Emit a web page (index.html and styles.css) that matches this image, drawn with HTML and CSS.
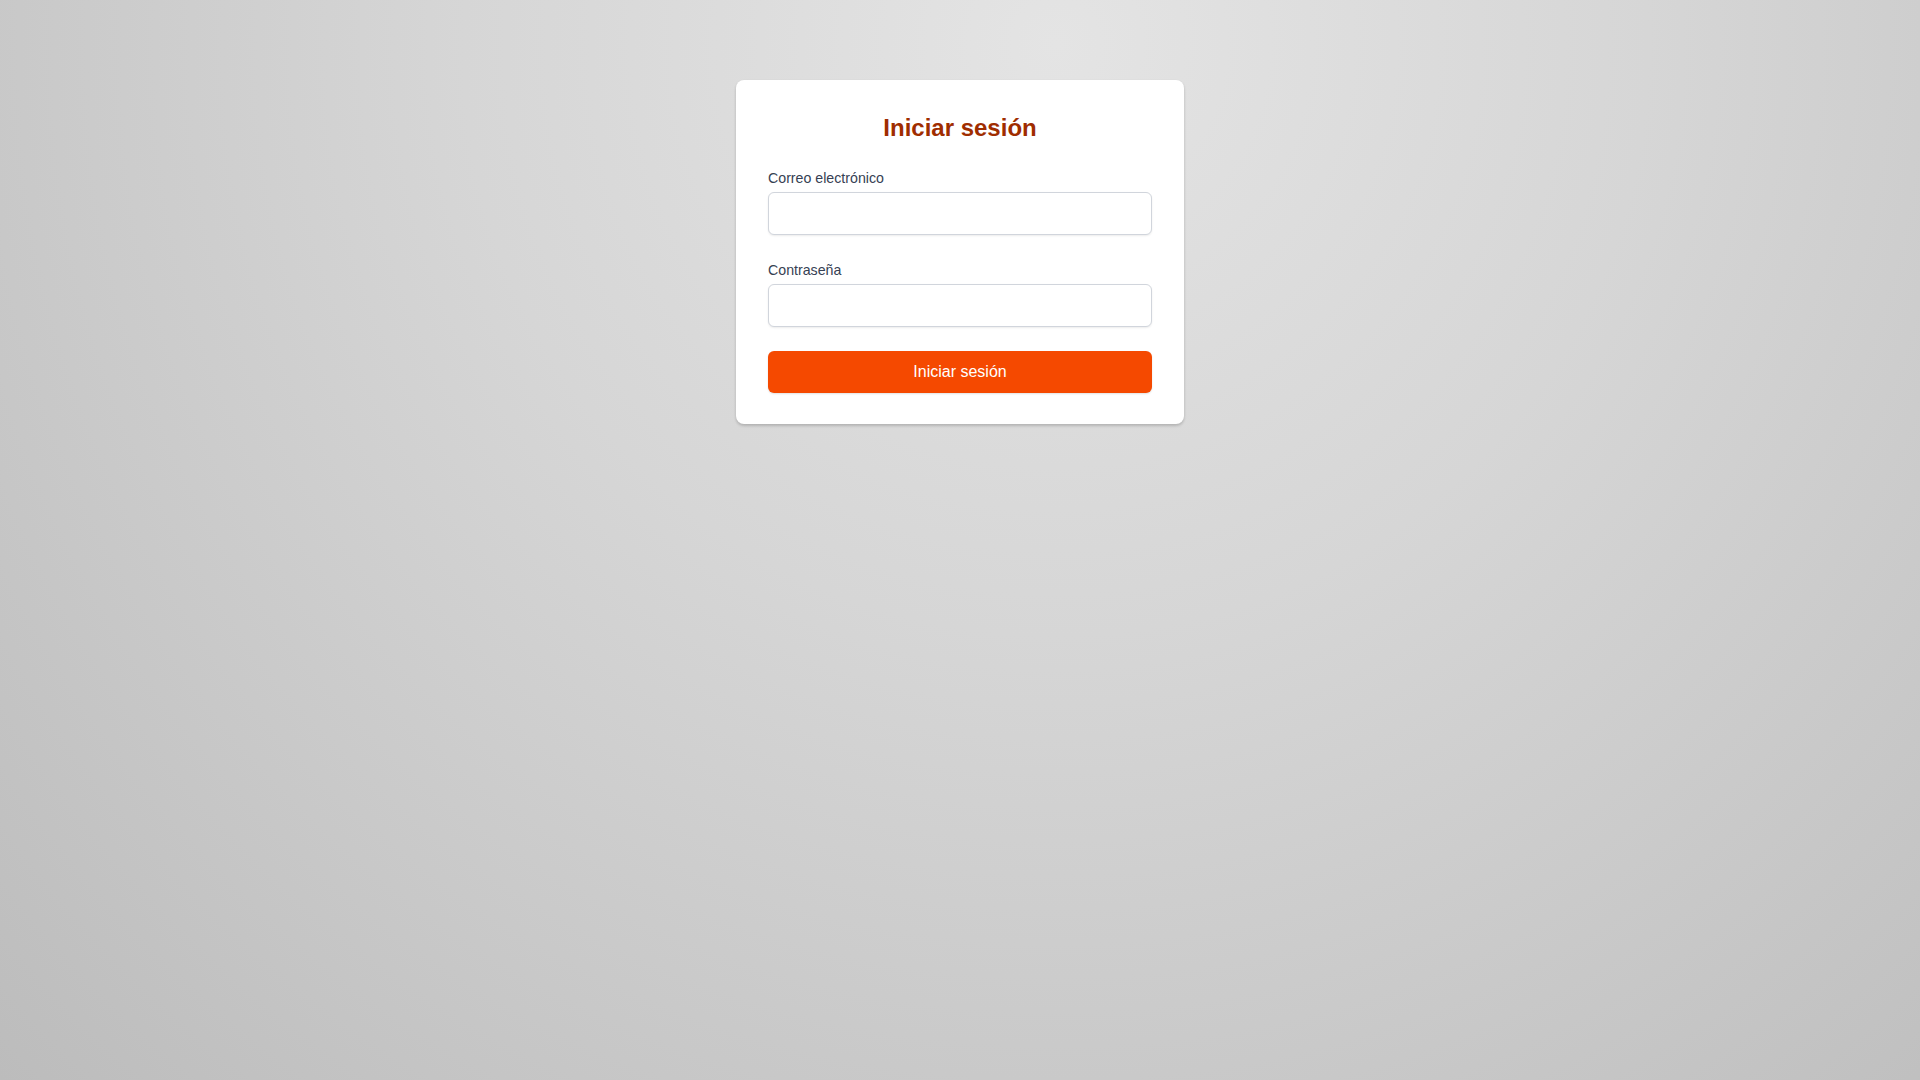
FILE: index.html
```html
<!DOCTYPE html>
<html lang="es">
<head>
<meta charset="utf-8">
<title>Iniciar sesión</title>
<link rel="stylesheet" href="styles.css">
</head>
<body>
<main class="page">
  <div class="card">
    <h1 class="title">Iniciar sesión</h1>
    <form class="form">
      <div class="field">
        <label class="label" for="email">Correo electrónico</label>
        <input class="input" id="email" type="email">
      </div>
      <div class="field field-last">
        <label class="label" for="password">Contraseña</label>
        <input class="input" id="password" type="password">
      </div>
      <button class="button" type="button">Iniciar sesión</button>
    </form>
  </div>
</main>
</body>
</html>
```
FILE: styles.css
```css
* { box-sizing: border-box; }
html, body { margin: 0; height: 100%; }
body {
  font-family: "Liberation Sans", Arial, sans-serif;
  background: radial-gradient(circle farthest-corner at 55% 4%, #e4e4e4 0%, #d6d6d6 40%, #c9c9c9 70%, #bcbcbc 100%);
  min-height: 1080px;
}
.page {
  display: flex;
  justify-content: center;
  padding-top: 80px;
}
.card {
  width: 448px;
  background: #fff;
  border-radius: 8px;
  padding: 32px 32px 31px;
  box-shadow: 0 2px 3px rgba(0,0,0,0.14), 0 1px 3px rgba(0,0,0,0.06);
}
.title {
  margin: 0 0 24px;
  font-size: 24px;
  line-height: 32px;
  font-weight: 700;
  text-align: center;
  color: #9f2d00;
}
.form { display: flex; flex-direction: column; }
.field { display: flex; flex-direction: column; margin-bottom: 25px; }
.field-last { margin-bottom: 24px; }
.label {
  font-size: 14.2px;
  line-height: 20px;
  color: #364153;
  margin-bottom: 4px;
}
.input {
  height: 43px;
  border: 1px solid #d1d5dc;
  border-radius: 6px;
  background: #fff;
  box-shadow: 0 1px 2px rgba(0,0,0,0.08);
  padding: 8px 12px;
  font: inherit;
  font-size: 16px;
}
.button {
  height: 42px;
  border: none;
  border-radius: 6px;
  background: #f54900;
  color: #fff;
  font-family: inherit;
  font-size: 16px;
  line-height: 24px;
  box-shadow: 0 1px 2px rgba(0,0,0,0.12);
  cursor: pointer;
}
```
